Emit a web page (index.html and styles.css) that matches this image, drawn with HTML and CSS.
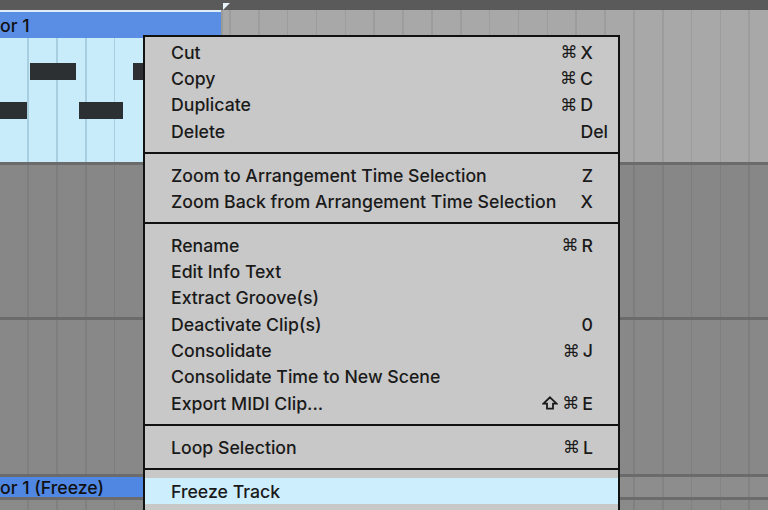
FILE: index.html
```html
<!DOCTYPE html>
<html>
<head>
<meta charset="utf-8">
<link rel="stylesheet" href="styles.css">
</head>
<body>
<div class="stage">
  <div class="topbar"></div>
  <div class="track track1">
    <div class="clip">
      <div class="clip-line"></div>
      <div class="clip-head">or 1</div>
      <div class="clip-body">
        <div class="note" style="left:30px;top:25px;width:46px"></div>
        <div class="note" style="left:133px;top:25px;width:40px"></div>
        <div class="note" style="left:0px;top:64px;width:27px"></div>
        <div class="note" style="left:79px;top:64px;width:44px"></div>
      </div>
    </div>
    <div class="lane"></div>
    <svg class="marker" width="10" height="10" viewBox="0 0 10 10"><polygon points="1,1 8,1 1,8" fill="#e8f4fa"/></svg>
  </div>
  <div class="sep"></div>
  <div class="track track2"></div>
  <div class="sep"></div>
  <div class="track track3"></div>
  <div class="sep"></div>
  <div class="track track4">
    <div class="clip2">or 1 (Freeze)</div>
  </div>
  <div class="sep"></div>
  <div class="track track5"></div>

  <div class="menu">
    <div class="item"><span>Cut</span><span class="key"><i class="cmd">⌘</i>X</span></div>
    <div class="item"><span>Copy</span><span class="key"><i class="cmd">⌘</i>C</span></div>
    <div class="item"><span>Duplicate</span><span class="key"><i class="cmd">⌘</i>D</span></div>
    <div class="item"><span>Delete</span><span class="key key-del">Del</span></div>
    <div class="divider"></div>
    <div class="item"><span>Zoom to Arrangement Time Selection</span><span class="key">Z</span></div>
    <div class="item"><span>Zoom Back from Arrangement Time Selection</span><span class="key">X</span></div>
    <div class="divider"></div>
    <div class="item"><span>Rename</span><span class="key"><i class="cmd">⌘</i>R</span></div>
    <div class="item"><span>Edit Info Text</span><span class="key"></span></div>
    <div class="item"><span>Extract Groove(s)</span><span class="key"></span></div>
    <div class="item"><span>Deactivate Clip(s)</span><span class="key">0</span></div>
    <div class="item"><span>Consolidate</span><span class="key"><i class="cmd">⌘</i>J</span></div>
    <div class="item"><span>Consolidate Time to New Scene</span><span class="key"></span></div>
    <div class="item"><span>Export MIDI Clip...</span><span class="key"><svg class="shift" width="16" height="14" viewBox="0 0 16 14"><path d="M8 1.3 L14.6 7.6 H11 V12.7 H5 V7.6 H1.4 Z" fill="none" stroke="#1a1a1a" stroke-width="1.8" stroke-linejoin="miter"/></svg><i class="cmd">⌘</i>E</span></div>
    <div class="divider"></div>
    <div class="item"><span>Loop Selection</span><span class="key"><i class="cmd">⌘</i>L</span></div>
    <div class="divider"></div>
    <div class="item active"><span>Freeze Track</span><span class="key"></span></div>
    <div class="item"><span></span><span class="key"></span></div>
  </div>
</div>
</body>
</html>
```
FILE: styles.css
```css
* { box-sizing: border-box; }
html, body { margin: 0; padding: 0; }
body {
  width: 768px;
  height: 510px;
  overflow: hidden;
  font-family: Inter, "DejaVu Sans", sans-serif;
  background: #8a8a8a;
}
.stage {
  position: relative;
  width: 768px;
  height: 510px;
  overflow: hidden;
  display: flex;
  flex-direction: column;
}
.topbar {
  height: 10px;
  background: #5a5a5a;
  flex: none;
}
.track {
  flex: none;
  position: relative;
  background-image: repeating-linear-gradient(to right, transparent 0, transparent 27.2px, rgba(0,0,0,0.07) 27.2px, rgba(0,0,0,0.07) 28.85px);
}
.track1 {
  height: 152px;
  display: flex;
  background-color: #a8a8a8;
}
.track2 { height: 152px; background-color: #878787; }
.track3 { height: 154px; background-color: #888888; }
.track4 { height: 20px; background-color: #8d8d8d; }
.track5 { flex: 1; background-color: #8a8a8a; }
.sep {
  flex: none;
  height: 3px;
  background: #6b6b6b;
}
.clip {
  width: 223px;
  display: flex;
  flex-direction: column;
  border-right: 2px solid #9a9a9a;
}
.clip-line { height: 2px; background: #dfeef6; }
.clip-head {
  height: 26px;
  background: #5a8de4;
  color: #111;
  font-size: 17.7px;
  font-weight: 500;
  line-height: 27px;
  white-space: nowrap;
}
.clip-body {
  flex: 1;
  position: relative;
  background-color: #c9ecfb;
  background-image: repeating-linear-gradient(to right, transparent 0, transparent 27.2px, #a8cfdf 27.2px, #a8cfdf 28.85px);
}
.note {
  position: absolute;
  height: 17px;
  background: #2c3033;
}
.lane { flex: 1; }
.marker {
  position: absolute;
  left: 222px;
  top: -8px;
}
.clip2 {
  width: 143px;
  height: 20px;
  background: #5087e2;
  color: #111;
  font-size: 17.7px;
  font-weight: 500;
  line-height: 21px;
  white-space: nowrap;
}
.menu {
  position: absolute;
  left: 143px;
  top: 35px;
  width: 477px;
  background: #c8c8c8;
  border: 2px solid #111;
  padding-top: 2px;
  color: #1a1a1a;
  font-size: 17.7px;
  font-weight: 500;
}
.item {
  height: 26.33px;
  display: flex;
  align-items: center;
  justify-content: space-between;
  padding: 0 25px 0 26px;
  white-space: nowrap;
}
.item.active { background: #cdeefc; }
.key {
  text-align: right;
  display: flex;
  align-items: center;
}
.cmd {
  font-style: normal;
  font-family: "DejaVu Sans", sans-serif;
  font-size: 17px;
  margin-right: 3px;
}
.shift {
  display: block;
  margin-right: 4px;
}
.key-del { margin-right: -15px; }
.divider {
  height: 2px;
  background: #111;
  margin: 7.8px 0;
}
```
